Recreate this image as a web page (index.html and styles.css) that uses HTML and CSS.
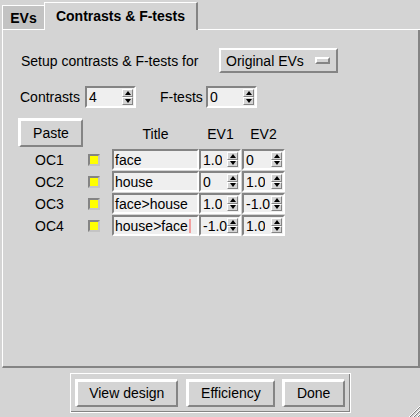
FILE: index.html
```html
<!DOCTYPE html>
<html>
<head>
<meta charset="utf-8">
<link rel="stylesheet" href="styles.css">
</head>
<body>
<div class="window">
  <div class="tabs">
    <div class="tab inactive">EVs</div>
    <div class="tab active">Contrasts &amp; F-tests</div>
    <div class="tab-filler"></div>
  </div>
  <div class="panel">
    <div class="setup-row">
      <span class="setup-label">Setup contrasts &amp; F-tests for</span>
      <div class="optmenu"><span>Original EVs</span><span class="indicator"></span></div>
    </div>
    <div class="count-row">
      <span class="lbl-contrasts">Contrasts</span>
      <div class="spin spin-count"><span class="val">4</span><span class="arrows"><span class="up"></span><span class="down"></span></span></div>
      <span class="lbl-ftests">F-tests</span>
      <div class="spin spin-count"><span class="val">0</span><span class="arrows"><span class="up"></span><span class="down"></span></span></div>
    </div>
    <div class="table">
      <div class="btn paste">Paste</div>
      <div></div>
      <div class="hdr">Title</div>
      <div class="hdr">EV1</div>
      <div class="hdr">EV2</div>

      <div class="oc">OC1</div>
      <div class="cb-cell"><span class="cb"></span></div>
      <div class="entry">face</div>
      <div class="spin"><span class="val">1.0</span><span class="arrows"><span class="up"></span><span class="down"></span></span></div>
      <div class="spin"><span class="val">0</span><span class="arrows"><span class="up"></span><span class="down"></span></span></div>

      <div class="oc">OC2</div>
      <div class="cb-cell"><span class="cb"></span></div>
      <div class="entry">house</div>
      <div class="spin"><span class="val">0</span><span class="arrows"><span class="up"></span><span class="down"></span></span></div>
      <div class="spin"><span class="val">1.0</span><span class="arrows"><span class="up"></span><span class="down"></span></span></div>

      <div class="oc">OC3</div>
      <div class="cb-cell"><span class="cb"></span></div>
      <div class="entry">face&gt;house</div>
      <div class="spin"><span class="val">1.0</span><span class="arrows"><span class="up"></span><span class="down"></span></span></div>
      <div class="spin"><span class="val">-1.0</span><span class="arrows"><span class="up"></span><span class="down"></span></span></div>

      <div class="oc">OC4</div>
      <div class="cb-cell"><span class="cb"></span></div>
      <div class="entry">house&gt;face<span class="caret"></span></div>
      <div class="spin"><span class="val">-1.0</span><span class="arrows"><span class="up"></span><span class="down"></span></span></div>
      <div class="spin"><span class="val">1.0</span><span class="arrows"><span class="up"></span><span class="down"></span></span></div>
    </div>
  </div>
  <div class="footer">
    <div class="btnframe">
      <div class="btn b-view">View design</div>
      <div class="btn b-eff">Efficiency</div>
      <div class="btn b-done">Done</div>
    </div>
  </div>
  <svg class="grip" width="12" height="12" viewBox="0 0 12 12">
    <line x1="12" y1="1" x2="1" y2="12" stroke="#ffffff" stroke-width="1"/>
    <line x1="12" y1="2" x2="2" y2="12" stroke="#848484" stroke-width="1"/>
    <line x1="12" y1="5" x2="5" y2="12" stroke="#ffffff" stroke-width="1"/>
    <line x1="12" y1="6" x2="6" y2="12" stroke="#848484" stroke-width="1"/>
    <line x1="12" y1="9" x2="9" y2="12" stroke="#ffffff" stroke-width="1"/>
    <line x1="12" y1="10" x2="10" y2="12" stroke="#848484" stroke-width="1"/>
  </svg>
</div>
</body>
</html>
```
FILE: styles.css
```css
* { box-sizing: border-box; }
html, body { margin: 0; padding: 0; }
body {
  background: #d4d4d4;
  font-family: "Liberation Sans", Arial, sans-serif;
  font-size: 14px;
  color: #000;
}
.window {
  width: 420px;
  height: 417px;
  display: flex;
  flex-direction: column;
  position: relative;
  overflow: hidden;
}
.tabs {
  display: flex;
  align-items: flex-end;
  height: 30px;
  padding-left: 2px;
}
.tab {
  font-weight: bold;
  display: flex;
  align-items: center;
  justify-content: center;
}
.tab.inactive {
  width: 42px;
  height: 25px;
  background: #c3c3c3;
  border-top: 1px solid #fff;
  border-left: 1px solid #fff;
  border-bottom: 1px solid #fff;
  padding-top: 1px;
}
.tab.active {
  width: 154px;
  height: 28px;
  border-top: 1px solid #fff;
  border-left: 1px solid #fff;
  border-right: 2px solid #848484;
  padding-bottom: 1px;
}
.tab-filler {
  flex: 1;
  height: 1px;
  background: #fff;
}
.panel {
  margin-left: 2px;
  height: 338px;
  border-left: 1px solid #fff;
  border-right: 2px solid #848484;
  border-bottom: 2px solid #848484;
  display: flex;
  flex-direction: column;
}
.setup-row {
  margin-top: 18px;
  height: 25px;
  padding-left: 18px;
  display: flex;
  align-items: center;
}
.setup-label { width: 198px; }
.optmenu {
  width: 119px;
  height: 25px;
  border: 2px solid;
  border-color: #fff #848484 #848484 #fff;
  display: flex;
  align-items: center;
  justify-content: space-between;
  padding-left: 5px;
  padding-right: 6px;
}
.indicator {
  width: 15px;
  height: 7px;
  border: 2px solid;
  border-color: #fff #848484 #848484 #fff;
}
.count-row {
  margin-top: 13px;
  height: 22px;
  padding-left: 17px;
  display: flex;
  align-items: center;
}
.lbl-contrasts { width: 65px; }
.lbl-ftests { width: 46px; margin-left: 24px; }
.spin {
  height: 21px;
  background: #efefef;
  border: 2px solid;
  border-color: #848484 #fff #fff #848484;
  display: flex;
  align-items: stretch;
  justify-content: space-between;
}
.spin-count { width: 51px; height: 22px; }
.spin .val {
  padding-left: 2px;
  display: flex;
  align-items: center;
  white-space: nowrap;
  overflow: hidden;
}
.arrows {
  width: 11px;
  display: flex;
  flex-direction: column;
  margin: 1px 1px 1px 0;
}
.arrows span {
  flex: 1;
  background: #d4d4d4;
  border: 1px solid;
  border-color: #fff #848484 #848484 #fff;
  display: flex;
  align-items: center;
  justify-content: center;
}
.arrows .up::after {
  content: "";
  border-left: 3.5px solid transparent;
  border-right: 3.5px solid transparent;
  border-bottom: 4px solid #000;
}
.arrows .down::after {
  content: "";
  border-left: 3.5px solid transparent;
  border-right: 3.5px solid transparent;
  border-top: 4px solid #000;
}
.table {
  margin-top: 11px;
  padding-left: 16px;
  display: grid;
  grid-template-columns: 69px 24px 87px 43px 43px;
  grid-template-rows: 29px repeat(4, 21px);
  row-gap: 1px;
  align-items: center;
}
.btn {
  border: 2px solid;
  border-color: #fff #848484 #848484 #fff;
  display: flex;
  align-items: center;
  justify-content: center;
  box-shadow: -1px -1px 0 #fff;
}
.paste {
  width: 64px;
  height: 28px;
  align-self: start;
}
.hdr { text-align: center; }
.table .hdr:nth-child(3) { padding-left: 0; }
.oc { padding-left: 16px; }
.cb-cell { display: flex; align-items: center; }
.cb {
  width: 12px;
  height: 12px;
  background: #ffff00;
  border: 2px solid;
  border-color: #848484 #c4c4c4 #c4c4c4 #848484;
}
.entry {
  height: 21px;
  background: #efefef;
  border: 2px solid;
  border-color: #848484 #fff #fff #848484;
  padding-left: 1px;
  display: flex;
  align-items: center;
  white-space: nowrap;
  overflow: hidden;
}
.table .spin { height: 21px; }
.table .spin:nth-child(5n+4) { width: 42px; }
.caret {
  width: 2px;
  height: 14px;
  background: #f2a0a0;
  margin-left: 1px;
}
.footer {
  margin-top: 5px;
  display: flex;
  justify-content: center;
}
.btnframe {
  width: 281px;
  height: 40px;
  border: 1px solid #fff;
  box-shadow: inset -1px -1px 0 #848484, inset 1px 1px 0 #d4d4d4;
  display: flex;
  align-items: center;
  padding: 0 5px;
  gap: 9px;
}
.btnframe .btn { height: 27px; }
.b-view { width: 103px; }
.b-eff { width: 88px; margin-right: -1px; }
.b-done { width: 62px; }
.grip {
  position: absolute;
  right: 0;
  bottom: 0;
}
```
